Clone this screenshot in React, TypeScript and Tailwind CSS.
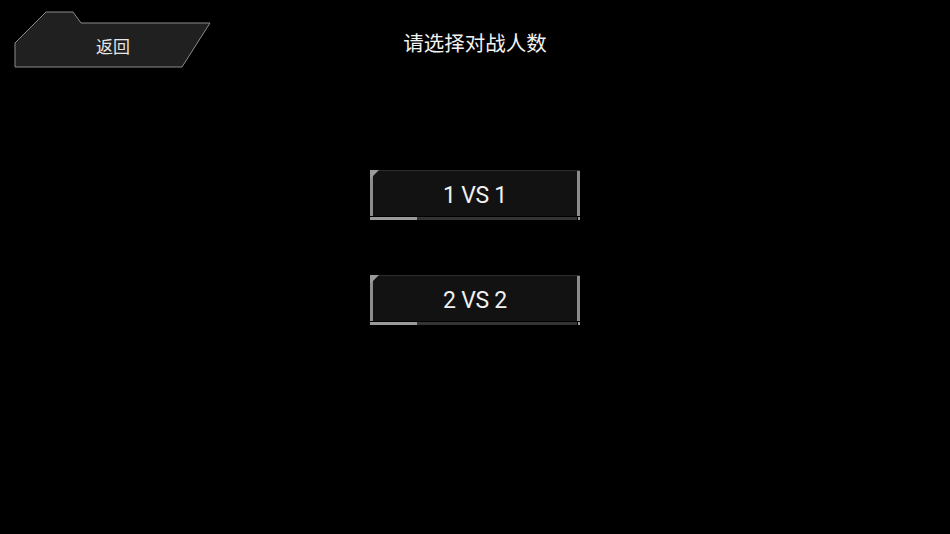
const font = { fontFamily: '"Noto Sans CJK SC", "Noto Sans", sans-serif' };

const BackButton = () => (
  <button className="relative w-[198px] h-[58px] text-white" style={font}>
    <svg className="absolute inset-0" width="198" height="58" viewBox="0 0 198 58">
      <polygon
        points="1,32 32,1 59,1 67,12 196,12 168,56 1,56"
        fill="#202020"
        stroke="#8a8a8a"
        strokeWidth="1"
      />
    </svg>
    <span className="relative flex h-full items-center justify-center pt-[11px] text-[17px] text-[#e6e6e6]">
      返回
    </span>
  </button>
);

const ModeButton = ({ label }: { label: string }) => (
  <button className="flex w-[210px] flex-col text-white" style={font}>
    <div className="relative flex h-[46px] w-full border-t border-[#2c2c2c] bg-[#121212]">
      <div className="w-[3px] bg-[#8c8c8c]" />
      <svg className="absolute left-0 top-[-1px]" width="9" height="9" viewBox="0 0 9 9">
        <polygon points="0,0 9,0 0,9" fill="#9a9a9a" />
      </svg>
      <span
        className="flex flex-1 items-center justify-center pt-[6px] text-[23px] tracking-[-0.3px] text-[#f0f0f0]"
        style={{ fontFamily: 'Roboto, "Noto Sans CJK SC", sans-serif' }}
      >
        {label}
      </span>
      <div className="w-[3px] bg-[#8c8c8c]" />
    </div>
    <div className="mt-[1px] flex h-[3px] w-full">
      <div className="w-[47px] bg-[#9a9a9a]" />
      <div className="flex-1 bg-[#333333]" />
      <div className="ml-[1px] w-[2px] bg-[#9a9a9a]" />
    </div>
  </button>
);

const App = () => {
  return (
    <div className="h-[534px] w-[950px] overflow-hidden bg-black">
      <div className="grid grid-cols-[1fr_auto_1fr] pt-[11px]">
        <div className="pl-[14px]">
          <BackButton />
        </div>
        <h1 className="pt-[17px] text-[20.5px] leading-[28px] text-[#f2f2f2]" style={font}>
          请选择对战人数
        </h1>
        <div />
      </div>
      <div className="mt-[101px] flex flex-col items-center gap-[55px]">
        <ModeButton label="1 VS 1" />
        <ModeButton label="2 VS 2" />
      </div>
    </div>
  );
};

export default App;
